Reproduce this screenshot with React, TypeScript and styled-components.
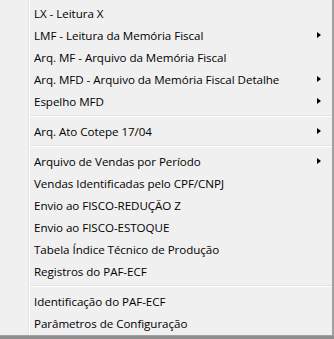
import styled, { createGlobalStyle } from 'styled-components';

const GlobalStyle = createGlobalStyle`
  html, body {
    margin: 0;
    padding: 0;
    background: #8e8e8e;
  }
`;

type Entry = { label: string; sub?: boolean } | 'sep';

const MENU: Entry[] = [
  { label: 'LX - Leitura X' },
  { label: 'LMF - Leitura da Memória Fiscal', sub: true },
  { label: 'Arq. MF - Arquivo da Memória Fiscal' },
  { label: 'Arq. MFD - Arquivo da Memória Fiscal Detalhe', sub: true },
  { label: 'Espelho MFD', sub: true },
  'sep',
  { label: 'Arq. Ato Cotepe 17/04', sub: true },
  'sep',
  { label: 'Arquivo de Vendas por Período', sub: true },
  { label: 'Vendas Identificadas pelo CPF/CNPJ' },
  { label: 'Envio ao FISCO-REDUÇÃO Z' },
  { label: 'Envio ao FISCO-ESTOQUE' },
  { label: 'Tabela Índice Técnico de Produção' },
  { label: 'Registros do PAF-ECF' },
  'sep',
  { label: 'Identificação do PAF-ECF' },
  { label: 'Parâmetros de Configuração' },
];

export default function App() {
  return (
    <>
      <GlobalStyle />
      <Menu>
        <Gutter />
        <List>
          {MENU.map((entry, i) =>
            entry === 'sep' ? (
              <Separator key={i} />
            ) : (
              <Item key={i}>
                <span>{entry.label}</span>
                {entry.sub && <Arrow />}
              </Item>
            )
          )}
        </List>
      </Menu>
    </>
  );
}

const Menu = styled.div`
  width: 334px;
  height: 336px;
  box-sizing: border-box;
  background: #f0f0f0;
  border-right: 2px solid #a0a0a0;
  border-bottom: 1px solid #a0a0a0;
  display: flex;
  font-family: 'Open Sans', 'Noto Sans', sans-serif;
  font-size: 11.6px;
  color: #000;
`;

const Gutter = styled.div`
  width: 28px;
  flex: none;
  border-right: 1px solid #e2e3e3;
  box-shadow: 1px 0 0 #ffffff;
`;

const List = styled.div`
  flex: 1;
  padding-top: 2px;
  display: flex;
  flex-direction: column;
`;

const Item = styled.div`
  height: 22px;
  display: flex;
  align-items: center;
  justify-content: space-between;
  padding-left: 5px;
  padding-right: 11px;
  letter-spacing: -0.05px;
  white-space: nowrap;
`;

const Arrow = styled.span`
  width: 0;
  height: 0;
  border-top: 3.5px solid transparent;
  border-bottom: 3.5px solid transparent;
  border-left: 4px solid #000;
`;

const Separator = styled.div`
  height: 8px;
  margin-left: 1px;
  display: flex;
  flex-direction: column;
  justify-content: center;
  &::before {
    content: '';
    height: 1px;
    background: #e2e3e3;
  }
  &::after {
    content: '';
    height: 1px;
    background: #ffffff;
  }
`;
